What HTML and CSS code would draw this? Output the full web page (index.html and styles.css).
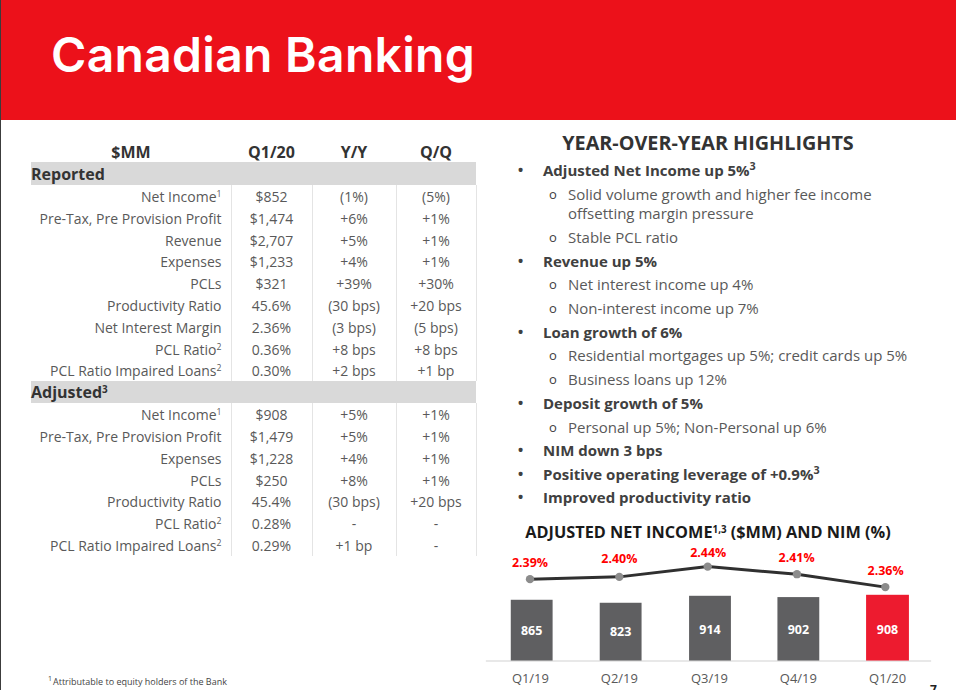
FILE: index.html
```html
<!DOCTYPE html>
<html lang="en">
<head>
<meta charset="utf-8">
<title>Canadian Banking</title>
<link rel="stylesheet" href="styles.css">
</head>
<body>
<div class="slide">
  <header class="banner"><h1 class="banner-title">Canadian Banking</h1></header>
  <main class="content">
    <section class="left">
      <table class="fin">
        <colgroup><col class="c-label"><col class="c-q"><col class="c-yy"><col class="c-qq"></colgroup>
        <thead>
          <tr><th>$MM</th><th>Q1/20</th><th>Y/Y</th><th>Q/Q</th></tr>
        </thead>
        <tbody>
          <tr class="band"><td colspan="4">Reported</td></tr>
          <tr><td class="lbl">Net Income<sup>1</sup></td><td>$852</td><td>(1%)</td><td>(5%)</td></tr>
          <tr><td class="lbl">Pre-Tax, Pre Provision Profit</td><td>$1,474</td><td>+6%</td><td>+1%</td></tr>
          <tr><td class="lbl">Revenue</td><td>$2,707</td><td>+5%</td><td>+1%</td></tr>
          <tr><td class="lbl">Expenses</td><td>$1,233</td><td>+4%</td><td>+1%</td></tr>
          <tr><td class="lbl">PCLs</td><td>$321</td><td>+39%</td><td>+30%</td></tr>
          <tr><td class="lbl">Productivity Ratio</td><td>45.6%</td><td>(30 bps)</td><td>+20 bps</td></tr>
          <tr><td class="lbl">Net Interest Margin</td><td>2.36%</td><td>(3 bps)</td><td>(5 bps)</td></tr>
          <tr><td class="lbl">PCL Ratio<sup>2</sup></td><td>0.36%</td><td>+8 bps</td><td>+8 bps</td></tr>
          <tr><td class="lbl">PCL Ratio Impaired Loans<sup>2</sup></td><td>0.30%</td><td>+2 bps</td><td>+1 bp</td></tr>
          <tr class="band band-adj"><td colspan="4">Adjusted<sup>3</sup></td></tr>
          <tr><td class="lbl">Net Income<sup>1</sup></td><td>$908</td><td>+5%</td><td>+1%</td></tr>
          <tr><td class="lbl">Pre-Tax, Pre Provision Profit</td><td>$1,479</td><td>+5%</td><td>+1%</td></tr>
          <tr><td class="lbl">Expenses</td><td>$1,228</td><td>+4%</td><td>+1%</td></tr>
          <tr><td class="lbl">PCLs</td><td>$250</td><td>+8%</td><td>+1%</td></tr>
          <tr><td class="lbl">Productivity Ratio</td><td>45.4%</td><td>(30 bps)</td><td>+20 bps</td></tr>
          <tr><td class="lbl">PCL Ratio<sup>2</sup></td><td>0.28%</td><td>-</td><td>-</td></tr>
          <tr><td class="lbl">PCL Ratio Impaired Loans<sup>2</sup></td><td>0.29%</td><td>+1 bp</td><td>-</td></tr>
        </tbody>
      </table>
      <p class="footnote"><sup>1</sup>Attributable to equity holders of the Bank</p>
    </section>
    <section class="right">
      <h2 class="hl-title">YEAR-OVER-YEAR HIGHLIGHTS</h2>
      <ul class="hl">
        <li class="hl-item"><span class="hl-bold">Adjusted Net Income up 5%<sup>3</sup></span>
          <ul class="sub">
            <li>Solid volume growth and higher fee income offsetting margin pressure</li>
            <li>Stable PCL ratio</li>
          </ul>
        </li>
        <li class="hl-item"><span class="hl-bold">Revenue up 5%</span>
          <ul class="sub">
            <li>Net interest income up 4%</li>
            <li>Non-interest income up 7%</li>
          </ul>
        </li>
        <li class="hl-item"><span class="hl-bold">Loan growth of 6%</span>
          <ul class="sub">
            <li>Residential mortgages up 5%; credit cards up 5%</li>
            <li>Business loans up 12%</li>
          </ul>
        </li>
        <li class="hl-item"><span class="hl-bold">Deposit growth of 5%</span>
          <ul class="sub">
            <li>Personal up 5%; Non-Personal up 6%</li>
          </ul>
        </li>
        <li class="hl-item"><span class="hl-bold">NIM down 3 bps</span></li>
        <li class="hl-item"><span class="hl-bold">Positive operating leverage of +0.9%<sup>3</sup></span></li>
        <li class="hl-item"><span class="hl-bold">Improved productivity ratio</span></li>
      </ul>
      <h3 class="chart-title">ADJUSTED NET INCOME<sup>1,3</sup> ($MM) AND NIM (%)</h3>
      <svg class="chart" width="460" height="149" viewBox="0 0 460 149" xmlns="http://www.w3.org/2000/svg">
        <line x1="7" y1="119.5" x2="454" y2="119.5" stroke="#e8e8e8" stroke-width="2"/>
        <rect x="32" y="58" width="42" height="61" fill="#5f5f61"/>
        <rect x="121.3" y="61" width="42" height="58" fill="#5f5f61"/>
        <rect x="211" y="54" width="42" height="65" fill="#5f5f61"/>
        <rect x="299.7" y="55.3" width="42" height="63.7" fill="#5f5f61"/>
        <rect x="388.7" y="53" width="43" height="66" fill="#ed1b2f"/>
        <polyline points="51.3,37.3 141,35 229.7,24.7 319.3,32.3 408,45.3" fill="none" stroke="#303030" stroke-width="3" stroke-linejoin="round"/>
        <g fill="#8c8c8c">
          <circle cx="51.3" cy="37.3" r="4.2"/>
          <circle cx="141" cy="35" r="4.2"/>
          <circle cx="229.7" cy="24.7" r="4.2"/>
          <circle cx="319.3" cy="32.3" r="4.2"/>
          <circle cx="408" cy="45.3" r="4.2"/>
        </g>
        <g class="nim" text-anchor="middle">
          <text x="51.3" y="24.7">2.39%</text>
          <text x="141" y="21.3">2.40%</text>
          <text x="230.2" y="14.7">2.44%</text>
          <text x="319" y="19.7">2.41%</text>
          <text x="408.3" y="33">2.36%</text>
        </g>
        <g class="val" text-anchor="middle">
          <text x="53" y="93">865</text>
          <text x="142.3" y="94.7">823</text>
          <text x="232" y="92">914</text>
          <text x="320.7" y="92">902</text>
          <text x="410.2" y="92">908</text>
        </g>
        <g class="axis" text-anchor="middle">
          <text x="51.7" y="141.3">Q1/19</text>
          <text x="141" y="141.3">Q2/19</text>
          <text x="231.5" y="141.3">Q3/19</text>
          <text x="320.7" y="141.3">Q4/19</text>
          <text x="410.3" y="141.3">Q1/20</text>
        </g>
      </svg>
    </section>
  </main>
  <span class="pagenum">7</span>
</div>
</body>
</html>
```
FILE: styles.css
```css
html, body {
  margin: 0;
  padding: 0;
  background: #ffffff;
}
.slide {
  position: relative;
  width: 955px;
  height: 690px;
  border-left: 1px solid #3c3c3c;
  overflow: hidden;
  font-family: "Open Sans", "Noto Sans", sans-serif;
  color: #595959;
}
.banner {
  height: 120px;
  background: #ec111a;
  box-sizing: border-box;
  padding: 31px 0 0 50px;
}
.banner-title {
  margin: 0;
  font-family: Inter, "Open Sans", sans-serif;
  font-weight: 600;
  font-size: 48px;
  line-height: 48px;
  color: #ffffff;
  letter-spacing: 0.3px;
}
.content {
  display: flex;
  height: 570px;
}
.left {
  width: 445px;
  padding-left: 30px;
  display: flex;
  flex-direction: column;
}
.fin {
  margin-top: 22px;
  width: 445px;
  border-collapse: collapse;
  table-layout: fixed;
}
.c-label { width: 200px; }
.c-q { width: 81px; }
.c-yy { width: 84px; }
.c-qq { width: 80px; }
.fin th {
  font-size: 16px;
  font-weight: 700;
  line-height: 20px;
  height: 20px;
  padding: 0;
  color: #333333;
  text-align: center;
}
.fin td {
  font-size: 14px;
  line-height: 19.8px;
  height: 19.8px;
  padding: 2px 0 0;
  text-align: center;
  border-right: 1px solid #e4e4e4;
  white-space: nowrap;
}
.fin td.lbl {
  text-align: right;
  padding-right: 9px;
}
.fin tr.band td {
  background: #d9d9d9;
  text-align: left;
  font-size: 16px;
  font-weight: 700;
  color: #333333;
  line-height: 22px;
  height: 22px;
  padding: 1px 0 0 0;
  border-right: none;
}
.fin tr.band-adj td {
  line-height: 21px;
  height: 21px;
}
sup {
  font-size: 0.62em;
  line-height: 0;
  vertical-align: 0.55em;
}
.footnote {
  margin: auto 0 0 17px;
  padding-bottom: 2px;
  font-size: 9px;
  line-height: 12px;
  color: #444444;
}
.footnote sup {
  font-size: 7px;
  margin-right: 1px;
}
.right {
  width: 460px;
  margin-left: 2px;
  display: flex;
  flex-direction: column;
}
.hl-title {
  margin: 11px 0 0;
  text-align: center;
  font-size: 19.8px;
  font-weight: 700;
  line-height: 24px;
  color: #333333;
}
.hl {
  list-style: none;
  margin: 2px 0 0;
  padding: 0 0 0 65px;
  font-size: 15px;
  line-height: 19.5px;
}
.hl sup {
  font-size: 0.72em;
}
.hl-item {
  position: relative;
  margin-top: 4px;
}
.hl-item::before {
  content: "•";
  position: absolute;
  left: -26px;
  top: 0;
  font-size: 19px;
  color: #404040;
}
.hl-bold {
  font-weight: 700;
  color: #404040;
}
.sub {
  list-style: none;
  margin: 0;
  padding: 0 0 0 25px;
}
.sub li {
  position: relative;
  margin-top: 4.3px;
}
.sub li::before {
  content: "o";
  position: absolute;
  left: -19px;
  top: 0;
  font-size: 13px;
  color: #404040;
}
.chart-title {
  margin: 14px 0 0;
  text-align: center;
  font-size: 16.3px;
  font-weight: 700;
  line-height: 20px;
  color: #1a1a1a;
}
.chart-title sup {
  font-size: 0.6em;
}
.chart {
  display: block;
  margin-top: 0;
}
.chart text {
  font-family: "Open Sans", "Noto Sans", sans-serif;
}
.nim text {
  fill: #ff0000;
  font-size: 12.5px;
  font-weight: 700;
}
.val text {
  fill: #ffffff;
  font-size: 12.5px;
  font-weight: 700;
}
.axis text {
  fill: #595959;
  font-size: 13px;
}
.pagenum {
  position: absolute;
  left: 929px;
  top: 681px;
  font-size: 12px;
  font-weight: 700;
  color: #222222;
}
```
